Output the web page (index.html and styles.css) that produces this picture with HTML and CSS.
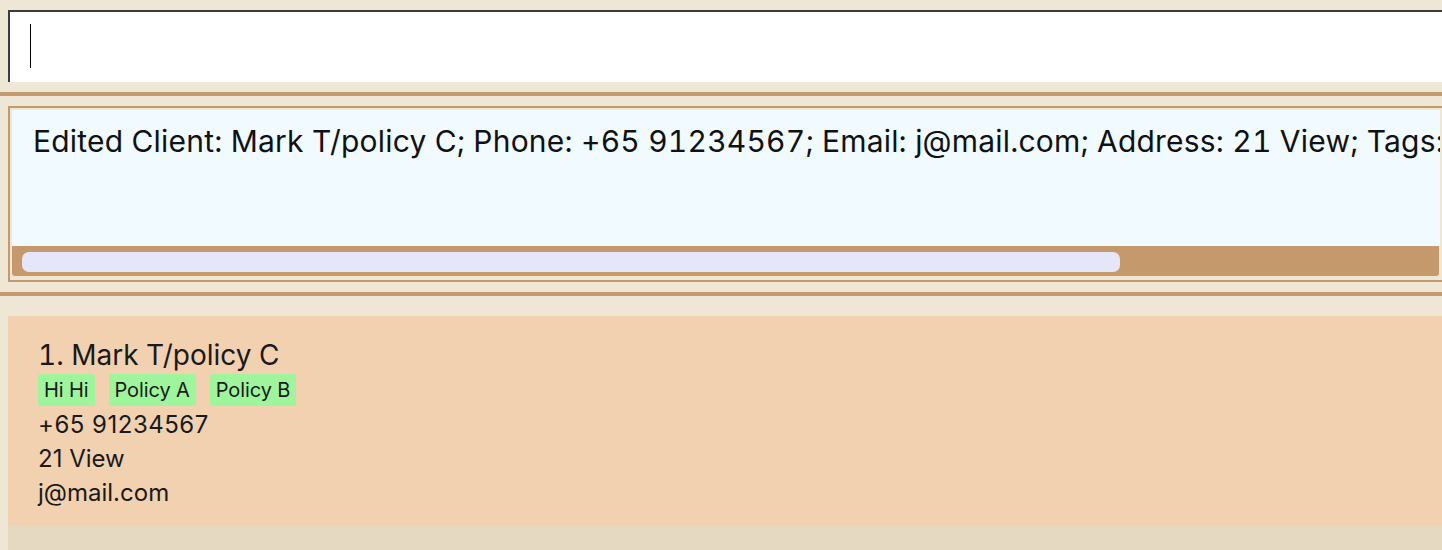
FILE: index.html
```html
<!DOCTYPE html>
<html>
<head>
<meta charset="utf-8">
<link rel="stylesheet" href="styles.css">
</head>
<body>
<div class="app">
  <div class="command-area">
    <div class="command-box"><span class="caret"></span></div>
  </div>
  <div class="divider"></div>
  <div class="result-area">
    <div class="result-box">
      <div class="result-text">Edited Client: Mark T/policy C; Phone: +65 91234567; Email: j@mail.com; Address: 21 View; Tags:</div>
      <div class="scroll-track"><div class="scroll-thumb"></div></div>
    </div>
  </div>
  <div class="divider"></div>
  <div class="list-area">
    <div class="card">
      <div class="name">1. Mark T/policy C</div>
      <div class="tags">
        <span class="tag">Hi Hi</span>
        <span class="tag">Policy A</span>
        <span class="tag">Policy B</span>
      </div>
      <div class="field phone">+65 91234567</div>
      <div class="field">21 View</div>
      <div class="field">j@mail.com</div>
    </div>
    <div class="list-rest"></div>
  </div>
</div>
</body>
</html>
```

FILE: styles.css
```css
html, body {
  margin: 0;
  padding: 0;
  height: 100%;
  overflow: hidden;
}
body {
  background: #efe7d6;
  font-family: Inter, "Liberation Sans", sans-serif;
  color: #1a1a1a;
}
.app {
  width: 1442px;
  height: 550px;
  display: flex;
  flex-direction: column;
}
.command-area {
  padding: 10px 0 10px 8px;
}
.command-box {
  height: 70px;
  background: #ffffff;
  border-top: 2px solid #3b3b3b;
  border-left: 2px solid #3b3b3b;
  margin-right: -20px;
  display: flex;
  align-items: flex-start;
  padding-left: 20px;
}
.caret {
  display: block;
  width: 1px;
  height: 44px;
  margin-top: 12px;
  background: #000;
}
.divider {
  height: 4px;
  background: #c49a6c;
  flex: none;
}
.result-area {
  padding: 10px 0 10px 8px;
}
.result-box {
  border: 2px solid #c49a6c;
  border-right: none;
  margin-right: -20px;
  padding: 2px 0 4px 2px;
  display: flex;
  flex-direction: column;
}
.result-text {
  background: #f0faff;
  height: 136px;
  box-sizing: border-box;
  padding: 11px 0 0 21px;
  font-size: 30px;
  line-height: 40px;
  letter-spacing: 0.2px;
  font-variant-numeric: tabular-nums;
  white-space: nowrap;
  overflow: hidden;
  color: #111;
  width: 1428px;
}
.scroll-track {
  height: 30px;
  width: 1427px;
  background: #c49a6c;
  border-radius: 0 0 3px 3px;
  box-sizing: border-box;
  padding: 6px 10px;
}
.scroll-thumb {
  width: 1098px;
  height: 20px;
  background: #e6e6fa;
  border-radius: 7px;
}
.list-area {
  padding: 20px 0 0 8px;
  flex: 1;
  display: flex;
  flex-direction: column;
}
.card {
  background: #f2d1b0;
  height: 210px;
  box-sizing: border-box;
  padding: 22px 0 0 30px;
  display: flex;
  flex-direction: column;
  align-items: flex-start;
}
.name {
  font-size: 28px;
  line-height: 34px;
  font-variant-numeric: tabular-nums;
}
.tags {
  display: flex;
  gap: 14px;
  margin-top: 2px;
  margin-bottom: 2px;
}
.tag {
  background: #9ff59b;
  border-radius: 3px;
  font-size: 20px;
  line-height: 32px;
  padding: 0 6px 0 6px;
  letter-spacing: -0.1px;
}
.field {
  font-size: 24px;
  line-height: 34px;
}
.phone {
  letter-spacing: 0.5px;
}
.list-rest {
  flex: 1;
  background: #e5d9c2;
}
```
